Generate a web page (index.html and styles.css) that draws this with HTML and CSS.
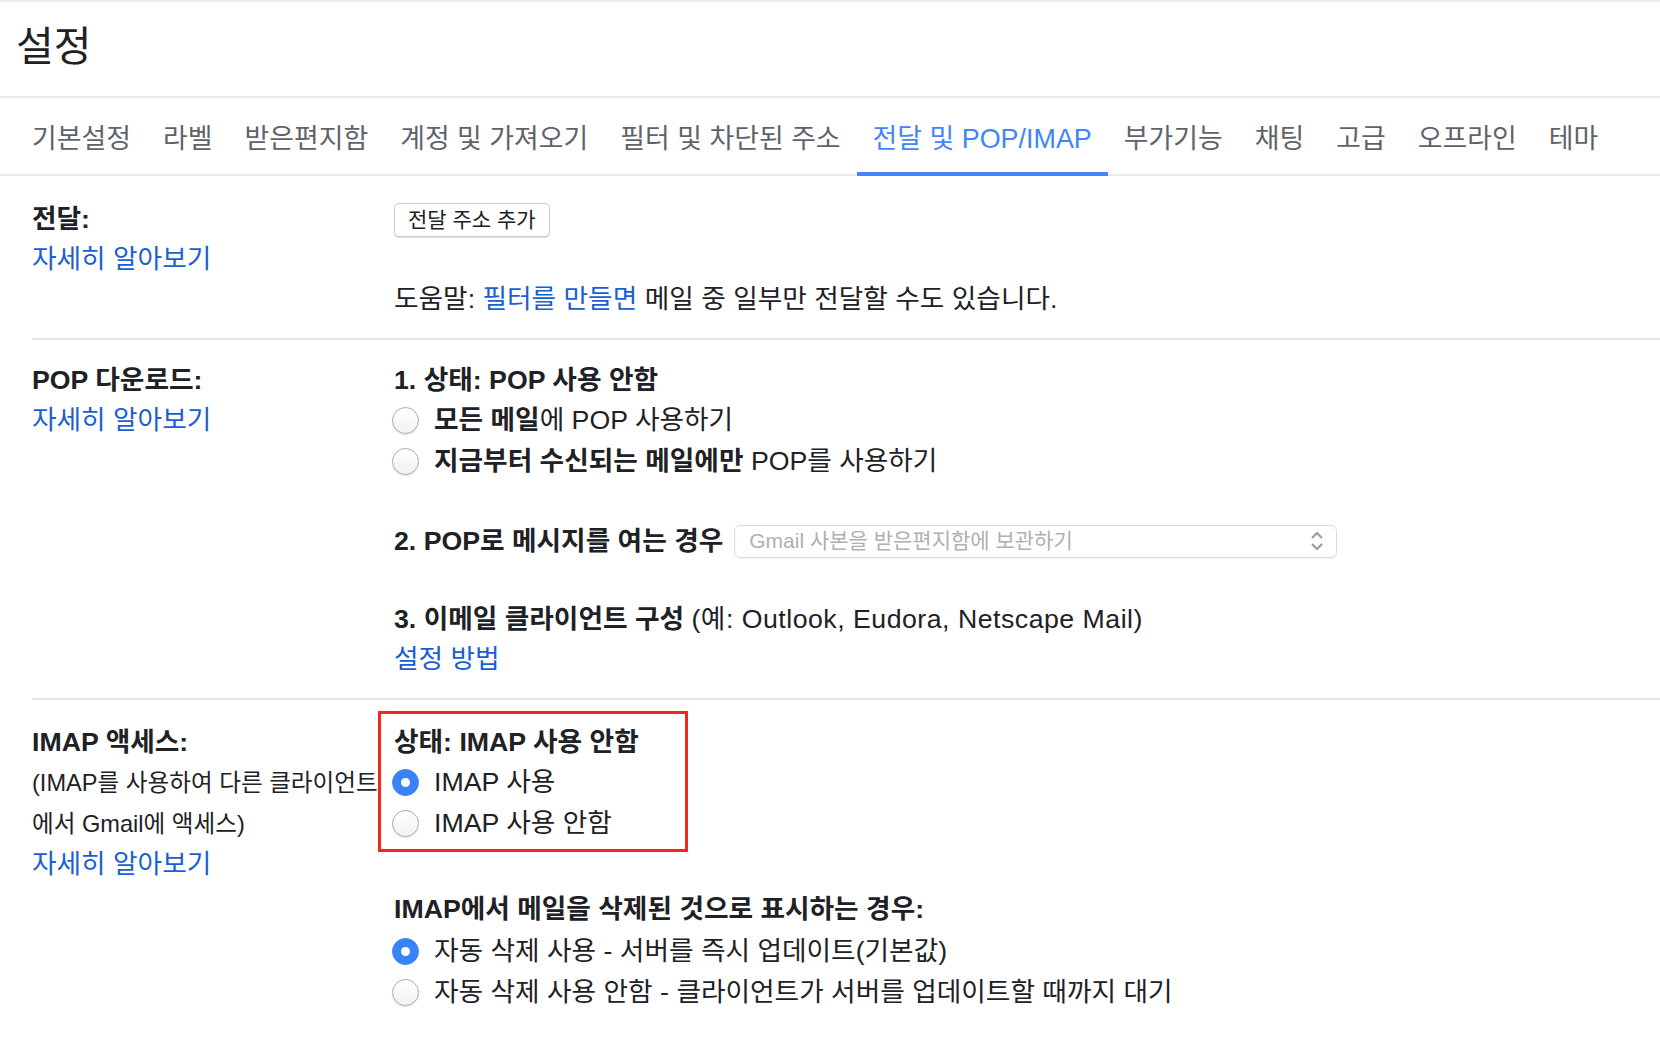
FILE: index.html
```html
<!DOCTYPE html>
<html lang="ko">
<head>
<meta charset="utf-8">
<title>설정</title>
<link rel="stylesheet" href="styles.css">
</head>
<body>
<header class="header"><h1 class="title">설정</h1></header>
<nav class="tabs">
  <span class="tab">기본설정</span>
  <span class="tab">라벨</span>
  <span class="tab">받은편지함</span>
  <span class="tab">계정 및 가져오기</span>
  <span class="tab">필터 및 차단된 주소</span>
  <span class="tab active">전달 및 POP/IMAP</span>
  <span class="tab">부가기능</span>
  <span class="tab">채팅</span>
  <span class="tab">고급</span>
  <span class="tab">오프라인</span>
  <span class="tab">테마</span>
</nav>

<section class="section s-forward">
  <div class="left">
    <div class="label">전달:</div>
    <a class="link">자세히 알아보기</a>
  </div>
  <div class="right">
    <button class="btn">전달 주소 추가</button>
    <div class="help">도움말: <a class="link">필터를 만들면</a> 메일 중 일부만 전달할 수도 있습니다.</div>
  </div>
</section>

<section class="section s-pop">
  <div class="left">
    <div class="label">POP 다운로드:</div>
    <a class="link">자세히 알아보기</a>
  </div>
  <div class="right">
    <div class="label">1. 상태: POP 사용 안함</div>
    <div class="opt"><span class="radio"></span><span><b>모든 메일</b>에 POP 사용하기</span></div>
    <div class="opt"><span class="radio"></span><span><b>지금부터 수신되는 메일에만</b> POP를 사용하기</span></div>
    <div class="row2">
      <span class="label">2. POP로 메시지를 여는 경우</span>
      <div class="select"><span>Gmail 사본을 받은편지함에 보관하기</span>
        <svg class="chev" width="14" height="22" viewBox="0 0 14 22"><polyline points="2,8 7,3 12,8" fill="none" stroke="#9a9a9a" stroke-width="2"/><polyline points="2,14 7,19 12,14" fill="none" stroke="#9a9a9a" stroke-width="2"/></svg>
      </div>
    </div>
    <div class="row3"><b>3. 이메일 클라이언트 구성</b> <span class="ex">(예: Outlook, Eudora, Netscape Mail)</span></div>
    <a class="link">설정 방법</a>
  </div>
</section>

<section class="section s-imap">
  <div class="left">
    <div class="label">IMAP 액세스:</div>
    <div class="note">(IMAP를 사용하여 다른 클라이언트</div>
    <div class="note">에서 Gmail에 액세스)</div>
    <a class="link">자세히 알아보기</a>
  </div>
  <div class="right">
    <div class="redbox">
      <div class="label">상태: IMAP 사용 안함</div>
      <div class="opt"><span class="radio on"></span><span>IMAP 사용</span></div>
      <div class="opt"><span class="radio"></span><span>IMAP 사용 안함</span></div>
    </div>
    <div class="label del">IMAP에서 메일을 삭제된 것으로 표시하는 경우:</div>
    <div class="opt first"><span class="radio on"></span><span>자동 삭제 사용 - 서버를 즉시 업데이트(기본값)</span></div>
    <div class="opt"><span class="radio"></span><span>자동 삭제 사용 안함 - 클라이언트가 서버를 업데이트할 때까지 대기</span></div>
  </div>
</section>
</body>
</html>
```
FILE: styles.css
```css
* { box-sizing: border-box; }
body {
  margin: 0;
  border-top: 2px solid #e9ebee;
  font-family: "Liberation Sans", "Noto Sans CJK KR", sans-serif;
  color: #202124;
  background: #fff;
  overflow: hidden;
}
.header {
  height: 96px;
  display: flex;
  align-items: center;
  padding: 0 0 4px 16px;
  border-bottom: 2px solid #e8eaed;
}
.title {
  margin: 0;
  font-size: 41px;
  font-weight: 400;
  line-height: 1;
  color: #202124;
}
.tabs {
  display: flex;
  height: 78px;
  padding-left: 16px;
  box-shadow: inset 0 -2px 0 #e8eaed;
}
.tab {
  display: flex;
  align-items: center;
  padding: 0 16px 2px;
  font-size: 26.9px;
  color: #5f6368;
  white-space: nowrap;
}
.tab.active {
  color: #4285f4;
  box-shadow: inset 0 -4px 0 #4285f4;
}
.section {
  display: grid;
  grid-template-columns: 362px 1fr;
  margin-left: 32px;
  border-bottom: 2px solid #e3e3e3;
  font-size: 26.7px;
  line-height: 40px;
}
.section:last-child { border-bottom: none; }
.left, .right { display: flex; flex-direction: column; align-items: flex-start; }
.label { font-weight: 700; }
.link { color: #1a5ed4; text-decoration: none; cursor: pointer; }
.s-forward { padding: 23px 0 19px; }
.btn {
  margin-top: 4px;
  height: 34px;
  padding: 0 13px;
  font-family: inherit;
  font-size: 21px;
  color: #202124;
  background: #fff;
  border: 1px solid #cccccc;
  border-radius: 5px;
  box-shadow: 0 1px 1px rgba(0,0,0,0.14);
  line-height: 30px;
}
.help { margin-top: 42px; }
.s-pop { padding: 20px 0 19px; }
.opt { display: flex; align-items: center; gap: 15px; margin-left: -2px; white-space: nowrap; line-height: 41px; }
.opt b { font-weight: 700; }
.radio {
  flex: none;
  width: 27px;
  height: 27px;
  border-radius: 50%;
  border: 1px solid #ababab;
  background: linear-gradient(#ffffff, #f2f2f2);
  box-shadow: 0 1px 1px rgba(0,0,0,0.12);
  display: flex;
  align-items: center;
  justify-content: center;
}
.radio.on {
  border-color: #3a82f7;
  background: #3a82f7;
  box-shadow: none;
}
.radio.on::after {
  content: "";
  width: 9px;
  height: 9px;
  border-radius: 50%;
  background: #fff;
}
.row2 { display: flex; align-items: center; gap: 11px; margin-top: 39px; }
.select {
  width: 603px;
  height: 33px;
  display: flex;
  align-items: center;
  justify-content: space-between;
  padding: 0 12px 0 14px;
  border: 1px solid #dadada;
  border-radius: 6px;
  box-shadow: 0 1px 1px rgba(0,0,0,0.06);
  font-size: 21px;
  color: #b0b0b0;
}
.chev { flex: none; }
.row3 { margin-top: 38px; }
.row3 b { font-weight: 700; }
.ex { letter-spacing: 0.5px; }
.s-imap { padding: 22px 0 40px; }
.note { font-size: 23.6px; line-height: 42px; white-space: nowrap; }
.note + .note { line-height: 40px; }
.redbox {
  position: relative;
  z-index: 1;
  margin: -11px 0 0 -16px;
  width: 310px;
  padding: 8px 0 5px 13px;
  border: 3px solid #f0291c;
  background: #fff;
}
.del { margin-top: 37px; }
.opt.first { margin-top: 2px; }
```
